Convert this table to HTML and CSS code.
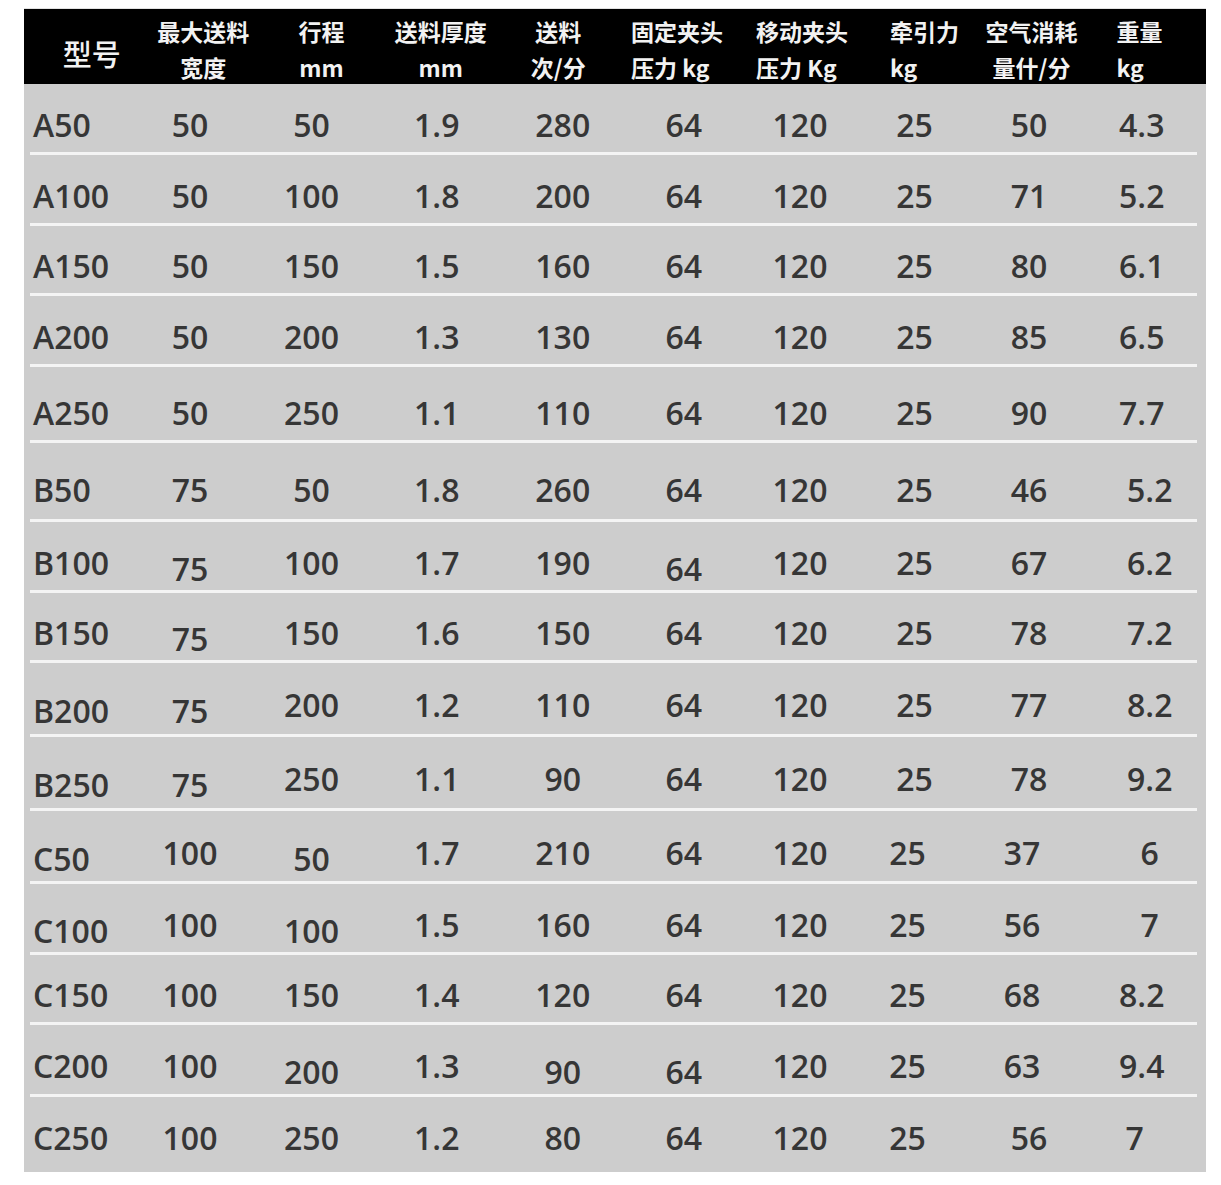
FILE: index.html
```html
<!DOCTYPE html>
<html lang="zh-CN">
<head>
<meta charset="utf-8">
<title>送料机参数表</title>
<link rel="stylesheet" href="styles.css">
</head>
<body>
<div class="sheet">
  <div class="head">
    <div class="hcell model">型号</div>
    <div class="hcell"><span>最大送料</span><span>宽度</span></div>
    <div class="hcell"><span>行程</span><span>mm</span></div>
    <div class="hcell"><span>送料厚度</span><span>mm</span></div>
    <div class="hcell"><span>送料</span><span>次/分</span></div>
    <div class="hcell left p14"><span>固定夹头</span><span>压力 kg</span></div>
    <div class="hcell left p17"><span>移动夹头</span><span>压力 Kg</span></div>
    <div class="hcell left p27"><span>牵引力</span><span>kg</span></div>
    <div class="hcell"><span>空气消耗</span><span>量什/分</span></div>
    <div class="hcell left p31"><span>重量</span><span>kg</span></div>
  </div>
  <div class="body">
    <div class="row"><span>A50</span><span>50</span><span>50</span><span>1.9</span><span>280</span><span>64</span><span>120</span><span>25</span><span>50</span><span>4.3</span></div>
    <div class="row"><span>A100</span><span>50</span><span>100</span><span>1.8</span><span>200</span><span>64</span><span>120</span><span>25</span><span>71</span><span>5.2</span></div>
    <div class="row h70"><span>A150</span><span>50</span><span>150</span><span>1.5</span><span>160</span><span>64</span><span>120</span><span>25</span><span>80</span><span>6.1</span></div>
    <div class="row"><span>A200</span><span>50</span><span>200</span><span>1.3</span><span>130</span><span>64</span><span>120</span><span>25</span><span>85</span><span>6.5</span></div>
    <div class="row h76"><span>A250</span><span>50</span><span>250</span><span>1.1</span><span>110</span><span>64</span><span>120</span><span>25</span><span>90</span><span>7.7</span></div>
    <div class="row h79"><span>B50</span><span>75</span><span>50</span><span>1.8</span><span>260</span><span>64</span><span>120</span><span>25</span><span>46</span><span class="sr">5.2</span></div>
    <div class="row"><span>B100</span><span class="lo">75</span><span>100</span><span>1.7</span><span>190</span><span class="lo">64</span><span>120</span><span>25</span><span>67</span><span class="sr">6.2</span></div>
    <div class="row h70"><span>B150</span><span class="lo">75</span><span>150</span><span>1.6</span><span>150</span><span>64</span><span>120</span><span>25</span><span>78</span><span class="sr">7.2</span></div>
    <div class="row h74"><span class="lo">B200</span><span class="lo">75</span><span>200</span><span>1.2</span><span>110</span><span>64</span><span>120</span><span>25</span><span>77</span><span class="sr">8.2</span></div>
    <div class="row h74"><span class="lo">B250</span><span class="lo">75</span><span>250</span><span>1.1</span><span>90</span><span>64</span><span>120</span><span>25</span><span>78</span><span class="sr">9.2</span></div>
    <div class="row h73"><span class="lo">C50</span><span>100</span><span class="lo">50</span><span>1.7</span><span>210</span><span>64</span><span>120</span><span class="sl">25</span><span class="sl">37</span><span class="sr">6</span></div>
    <div class="row"><span class="lo">C100</span><span>100</span><span class="lo">100</span><span>1.5</span><span>160</span><span>64</span><span>120</span><span class="sl">25</span><span class="sl">56</span><span class="sr">7</span></div>
    <div class="row h70"><span>C150</span><span>100</span><span>150</span><span>1.4</span><span>120</span><span>64</span><span>120</span><span class="sl">25</span><span class="sl">68</span><span>8.2</span></div>
    <div class="row h72"><span>C200</span><span>100</span><span class="lo">200</span><span>1.3</span><span class="lo">90</span><span class="lo">64</span><span>120</span><span class="sl">25</span><span class="sl">63</span><span>9.4</span></div>
    <div class="row h75 last"><span>C250</span><span>100</span><span>250</span><span>1.2</span><span>80</span><span>64</span><span>120</span><span class="sl">25</span><span>56</span><span class="sl">7</span></div>
  </div>
</div>
</body>
</html>
```

FILE: styles.css
```css
html, body {
  margin: 0;
  padding: 0;
  background: #ffffff;
}

.sheet {
  margin: 8px 0 0 24px;
  width: 1182px;
  border-top: 1px solid #e2e2e2;
}

.head {
  display: grid;
  grid-template-columns: 121.5px 115.5px 121px 117.5px 117.5px 122px 124px 114.5px 108px 120.5px;
  height: 75px;
  background: #000000;
  color: #f2f2f2;
  font-family: "Noto Sans CJK SC", "Noto Sans", sans-serif;
  font-weight: 700;
  font-size: 23px;
}

.hcell {
  display: flex;
  flex-direction: column;
  align-items: center;
  padding-top: 4px;
  line-height: 36px;
  white-space: nowrap;
  box-sizing: border-box;
}

.hcell.left {
  align-items: flex-start;
}

.hcell.p14 { padding-left: 14px; }
.hcell.p17 { padding-left: 17px; }
.hcell.p27 { padding-left: 27px; }
.hcell.p31 { padding-left: 31px; }

.hcell.model {
  padding-top: 24px;
  padding-left: 14px;
  line-height: 40px;
  font-size: 29px;
  font-weight: 500;
}

.body {
  background: #cdcdcd;
}

.row {
  display: grid;
  grid-template-columns: 100px 120px 123px 127.5px 124.5px 117.5px 115px 114px 115px 110.5px;
  align-items: center;
  height: 71px;
  box-sizing: border-box;
  margin: 0 9px 0 6px;
  padding-top: 12px;
  border-bottom: 3px solid #f4f4f4;
  font-family: "Open Sans", "Noto Sans", sans-serif;
  font-size: 32px;
  font-weight: 600;
  color: #363636;
  text-align: center;
}

.row span:first-child {
  text-align: left;
  padding-left: 3px;
}

.row .lo {
  padding-top: 12px;
}

.row .sl {
  padding-right: 14px;
}

.row .sr {
  padding-left: 16px;
}

.row.h70 { height: 70px; }
.row.h72 { height: 72px; }
.row.h73 { height: 73px; }
.row.h74 { height: 74px; }
.row.h75 { height: 75px; }
.row.h76 { height: 76px; padding-top: 18px; }
.row.h79 { height: 79px; padding-top: 17px; }

.row.last {
  border-bottom: none;
  padding-top: 6px;
}
```
